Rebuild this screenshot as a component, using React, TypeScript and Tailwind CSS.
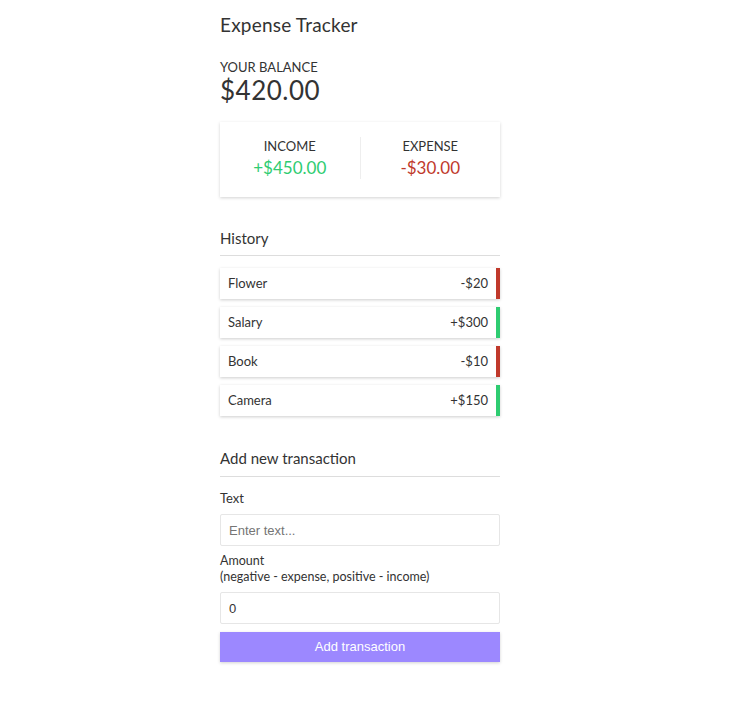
const transactions = [
  { id: 1, text: "Flower", amount: -20 },
  { id: 2, text: "Salary", amount: 300 },
  { id: 3, text: "Book", amount: -10 },
  { id: 4, text: "Camera", amount: 150 },
];

function App() {
  return (
    <div className="min-h-[708px] bg-white flex justify-center pr-5 text-[#333] font-['Lato','Liberation_Sans',sans-serif]">
      <div className="w-[280px] pt-[13px]">
        <h2 className="text-[19px] leading-[24px] tracking-[0.2px]">Expense Tracker</h2>

        <h4 className="mt-[22px] text-[13px] leading-[16px] uppercase">Your Balance</h4>
        <h1 className="text-[26px] leading-[30px] tracking-[0.5px]">$420.00</h1>

        <div className="mt-[17px] h-[75px] pb-[4px] flex items-center bg-white shadow-[0_1px_3px_rgba(0,0,0,0.18)]">
          <div className="flex-1 text-center">
            <h4 className="text-[13px] leading-[16px] uppercase">Income</h4>
            <p className="mt-[4px] text-[17px] leading-[20px] text-[#2ecc71]">+$450.00</p>
          </div>
          <div className="w-px h-[42px] bg-[#eee]"></div>
          <div className="flex-1 text-center">
            <h4 className="text-[13px] leading-[16px] uppercase">Expense</h4>
            <p className="mt-[4px] text-[17px] leading-[20px] text-[#c0392b]">-$30.00</p>
          </div>
        </div>

        <h3 className="mt-[31px] text-[15px] leading-[20px] pb-[7px] border-b border-[#ddd]">History</h3>
        <ul className="mt-[12px] flex flex-col gap-[8px]">
          {transactions.map((t) => (
            <li
              key={t.id}
              className={`h-[31px] flex items-center justify-between pl-2 pr-[8px] bg-white text-[13px] shadow-[0_1px_3px_rgba(0,0,0,0.2)] border-r-4 ${
                t.amount < 0 ? "border-[#c0392b]" : "border-[#2ecc71]"
              }`}
            >
              <span>{t.text}</span>
              <span>
                {t.amount < 0 ? "-" : "+"}${Math.abs(t.amount)}
              </span>
            </li>
          ))}
        </ul>

        <h3 className="mt-[32px] text-[15px] leading-[20px] pb-[8px] border-b border-[#ddd]">Add new transaction</h3>
        <form className="mt-[13px]">
          <label className="block text-[13px] leading-[16px]">Text</label>
          <input
            type="text"
            placeholder="Enter text..."
            className="mt-[8px] block w-full h-[32px] px-2 border border-[#e6e6e6] rounded-[2px] text-[13px] text-[#333] font-['Liberation_Sans',sans-serif] placeholder:text-[#757575]"
          />
          <label className="block mt-[7px] text-[12.5px] leading-[16px]">
            Amount <br />
            (negative - expense, positive - income)
          </label>
          <input
            type="number"
            defaultValue={0}
            className="mt-[7px] block w-full h-[32px] px-2 border border-[#e6e6e6] rounded-[2px] text-[13px] text-[#333] font-['Liberation_Sans',sans-serif]"
          />
          <button
            type="button"
            className="mt-[8px] block w-full h-[30px] bg-[#9c88ff] text-white text-[13px] font-['Liberation_Sans',sans-serif] shadow-[0_1px_3px_rgba(0,0,0,0.18)]"
          >
            Add transaction
          </button>
        </form>
      </div>
    </div>
  );
}

export default App;
